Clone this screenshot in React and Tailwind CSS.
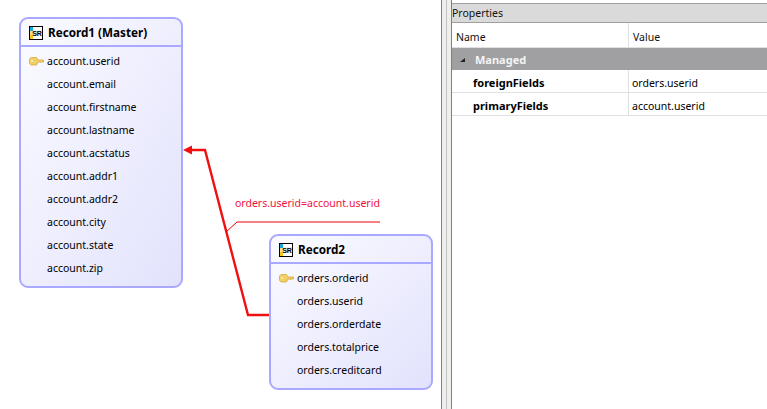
function KeyIcon() {
  return (
    <svg width="15" height="9" viewBox="0 0 15 9" className="shrink-0">
      <path d="M0.5 2 L2 0.5 L7.5 0.5 L9 3 L14.5 3 L14.5 5 L12.5 5 L11.5 6 L10.5 5 L9 5 L7.5 8 L2 8 L0.5 6.5 Z" fill="#f2cf63" stroke="#d3aa44" strokeWidth="0.8" />
      <rect x="2" y="3" width="2" height="2" fill="#fbe9a8" />
    </svg>
  )
}

function RecordIcon() {
  return (
    <svg width="14" height="14" viewBox="0 0 14 14" className="shrink-0">
      <rect x="0.5" y="0.5" width="13" height="13" fill="#fff" stroke="#000" />
      <rect x="1" y="1" width="3" height="4" fill="#19a8d8" />
      <rect x="1" y="9" width="3" height="4" fill="#f5c518" />
      <rect x="1" y="5" width="3" height="4" fill="#f5e08a" />
      <rect x="4" y="4" width="9" height="6" fill="#eee" />
      <text x="3.2" y="9.6" fontSize="7" fontWeight="700" fontFamily="'Liberation Sans', sans-serif" fill="#000">SR</text>
    </svg>
  )
}

function RecordNode({ title, fields, className }) {
  return (
    <div className={`absolute rounded-[9px] border-2 border-[#a9a9ff] bg-gradient-to-br from-[#fbfbff] to-[#e2e2fd] ${className}`}>
      <div className="h-[28px] flex items-center pl-[8px] pt-[2px] gap-[5px] border-b-2 border-[#a9a9ff]">
        <RecordIcon />
        <span className="font-bold text-[11.7px] text-[#000]">{title}</span>
      </div>
      <div className="pt-[3px]">
        {fields.map((f, i) => (
          <div key={f} className="h-[23px] flex items-center pl-[8px]">
            <div className="w-[17px] shrink-0">{i === 0 && <KeyIcon />}</div>
            <span className="ml-[1px] text-[#000]">{f}</span>
          </div>
        ))}
      </div>
    </div>
  )
}

export default function App() {
  return (
    <div className="w-[767px] h-[409px] flex overflow-hidden bg-white text-[10.5px] font-['Noto_Sans',sans-serif]">
      {/* diagram canvas */}
      <div className="relative w-[441px] shrink-0 bg-white">
        <RecordNode
          title="Record1 (Master)"
          className="left-[19px] top-[17px] w-[164px] h-[271px]"
          fields={['account.userid', 'account.email', 'account.firstname', 'account.lastname', 'account.acstatus', 'account.addr1', 'account.addr2', 'account.city', 'account.state', 'account.zip']}
        />
        <RecordNode
          title="Record2"
          className="left-[269px] top-[234px] w-[164px] h-[156px]"
          fields={['orders.orderid', 'orders.userid', 'orders.orderdate', 'orders.totalprice', 'orders.creditcard']}
        />
        <svg width="441" height="409" className="absolute left-0 top-0 pointer-events-none">
          <path d="M269 315 L248 315 L205 150 L190 150" fill="none" stroke="#f01010" strokeWidth="2.4" />
          <path d="M183 150 L192 145.5 L192 154.5 Z" fill="#f01010" />
          <path d="M226 232 L237 222 L380 222" fill="none" stroke="#f00000" strokeWidth="1" />
        </svg>
        <span className="absolute left-[235px] top-[196px] text-[#f0103c]">orders.userid=account.userid</span>
      </div>

      {/* splitter */}
      <div className="w-[11px] shrink-0 flex bg-[#eeeeea] border-x border-[#808088]">
        <div className="w-[5px] border-r border-[#c4c4c4]" />
      </div>

      {/* properties panel */}
      <div className="flex-1 flex flex-col min-w-0">
        <div className="h-[20px] mt-[3px] pt-[2px] bg-[#dadada] border-y border-[#a0a0a0] flex items-center text-[#111]">Properties</div>
        <div className="flex-1 bg-white">
          <div className="h-[25px] flex items-center border-b border-[#e0e0e0] text-[#111]">
            <div className="w-[177px] pl-[4px] pt-[6px] border-r border-[#e0e0e0] h-full flex items-center">Name</div>
            <div className="pl-[4px] pt-[6px]">Value</div>
          </div>
          <div className="h-[22px] pt-[2px] bg-[#a0a0a2] flex items-center text-[#f4f4f4] text-[11px] font-bold">
            <svg width="8" height="8" viewBox="0 0 8 8" className="ml-[7px]"><path d="M1 6 L6 6 L6 2 Z" fill="#222" /></svg>
            <span className="ml-[8px]">Managed</span>
          </div>
          {[['foreignFields', 'orders.userid'], ['primaryFields', 'account.userid']].map(([n, v]) => (
            <div key={n} className="h-[23px] flex border-b border-[#e0e0e0] text-[#000]">
              <div className="w-[177px] pl-[21px] pt-[5px] border-r border-[#e0e0e0] flex items-center text-[11px] font-bold">{n}</div>
              <div className="pl-[3px] pt-[5px] flex items-center">{v}</div>
            </div>
          ))}
        </div>
      </div>
    </div>
  )
}
